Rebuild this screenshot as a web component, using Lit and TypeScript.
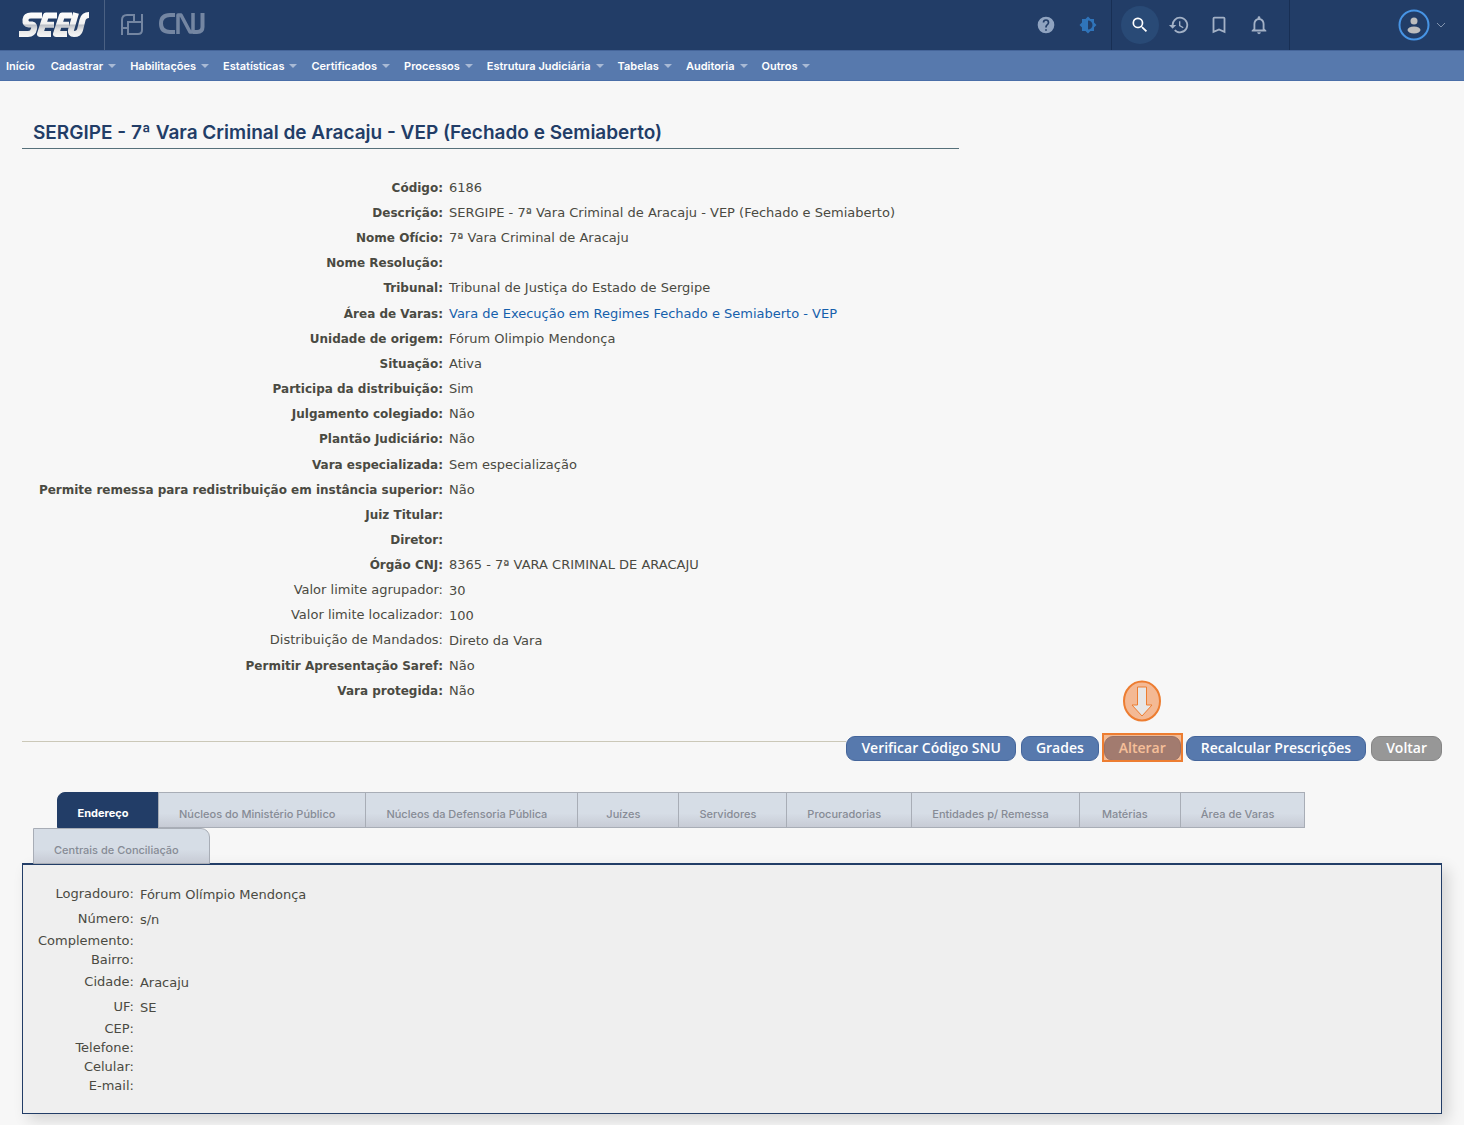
import { LitElement, html, css, nothing } from "lit";
import { customElement } from "lit/decorators.js";

const MENU: [string, boolean][] = [
  ["Início", false],
  ["Cadastrar", true],
  ["Habilitações", true],
  ["Estatísticas", true],
  ["Certificados", true],
  ["Processos", true],
  ["Estrutura Judiciária", true],
  ["Tabelas", true],
  ["Auditoria", true],
  ["Outros", true],
];

@customElement("seeu-header")
export class SeeuHeader extends LitElement {
  static styles = css`
    :host { display: block; font-family: Inter, "Liberation Sans", sans-serif; }
    .top { display: flex; align-items: stretch; height: 50px; background: #223d67; }
    .brand { display: flex; align-items: center; box-sizing: border-box; width: 105px; padding-left: 18px; border-right: 1px solid #4b6183; }
    .brand svg, .cnj svg, button svg { display: block; }
    .cnj { display: flex; align-items: center; gap: 15px; padding: 0 0 2px 15px; }
    .spacer { flex: 1; }
    .group { display: flex; align-items: center; justify-content: center; }
    .help { gap: 18px; padding-right: 11px; }
    .tools { box-sizing: border-box; width: 179px; justify-content: flex-start; gap: 16px; padding-left: 9px; border-left: 1px solid #182f54; border-right: 1px solid #182f54; }
    .user { box-sizing: border-box; width: 174px; justify-content: flex-end; padding-right: 18px; }
    button { display: flex; align-items: center; justify-content: center; width: 24px; height: 24px; padding: 0; border: 0; background: none; color: #a3b1c6; cursor: pointer; }
    .search { width: 38px; height: 38px; margin-right: -8px; border-radius: 50%; background: #294a76; color: #fff; }
    .account { width: 50px; height: 36px; gap: 5px; }
    nav { display: flex; gap: 14px; align-items: center; height: 31px; padding: 0 6px; background: #5779ad; border-top: 1px solid #45659a; border-bottom: 1px solid #4a6ea8; box-sizing: border-box; }
    nav a { display: flex; align-items: center; gap: 5px; color: #fff; text-decoration: none; font-size: 11px; font-weight: 600; line-height: 16px; white-space: nowrap; }
    nav a:first-child { padding-right: 2px; }
    .caret { width: 0; height: 0; border: 4px solid transparent; border-top-color: #a9bad5; border-bottom: 0; }
  `;

  render() {
    return html`
      <header>
        <div class="top">
          <a class="brand" href="#" aria-label="SEEU">
            <svg width="72" height="28" viewBox="0 0 72 28" fill="none" stroke="url(#metal)" stroke-width="6" stroke-linejoin="round">
              <defs>
                <linearGradient id="metal" gradientUnits="userSpaceOnUse" x1="0" y1="1" x2="0" y2="27">
                  <stop offset="0" stop-color="#ffffff" />
                  <stop offset=".46" stop-color="#f0f0f0" />
                  <stop offset=".5" stop-color="#b9bec6" />
                  <stop offset=".7" stop-color="#e6e6e6" />
                  <stop offset="1" stop-color="#fafafa" />
                </linearGradient>
              </defs>
              <path d="M24 4.500H13Q8 4.500 7.500 8.500Q7 13 11 13.500H14Q17 14 16 18Q15 23 10 23H1" />
              <path d="M39 4.500H28L22 23H33M24 13.700H36" />
              <path d="M54 4.500H44L38 23H49M40 13.700H51" />
              <path d="M58 2L53 19Q52 23 56 23Q61 23 62 19L64.500 9Q66 4 71 4" />
            </svg>
          </a>
          <div class="cnj">
            <svg width="24" height="24" viewBox="0 0 24 24" fill="none" stroke="#7486a2" stroke-width="2">
              <path d="M2 23V8Q2 3 7 3H14V10M2 16H8M22 2V18Q22 22 18 22H8V10H22" />
            </svg>
            <svg width="48" height="24" viewBox="0 0 48 24" fill="none" stroke="#7486a2" stroke-width="4">
              <path d="M16 3H11Q2 3 2 11.500Q2 20 11 20H16" />
              <path d="M19 22V3H22L31 20H34V1" stroke-width="3.500" stroke-linejoin="round" />
              <path d="M43.500 1V15Q43.500 20 38 20H34" />
            </svg>
          </div>
          <div class="spacer"></div>
          <div class="group help">
            <button aria-label="Ajuda"><svg width="20" height="20" viewBox="0 0 24 24" fill="#8fa3c0"><path d="M12 2a10 10 0 1 0 0 20 10 10 0 0 0 0-20zm1 17h-2v-2h2zm2.070-7.750-.9.920C13.450 12.900 13 13.500 13 15h-2v-.5c0-1.100.45-2.100 1.170-2.830l1.240-1.260c.37-.36.59-.86.59-1.410a2 2 0 0 0-4 0H8a4 4 0 0 1 8 0c0 .88-.36 1.680-.93 2.250z" /></svg></button>
            <button aria-label="Contraste"><svg width="18" height="18" viewBox="0 0 24 24" fill="#2f74ba"><path fill-rule="evenodd" d="M20 15.310 23.310 12 20 8.690V4h-4.690L12 .69 8.690 4H4v4.690L.69 12 4 15.310V20h4.690L12 23.310 15.310 20H20zM12 18V6a6 6 0 0 1 0 12z" /></svg></button>
          </div>
          <div class="group tools">
            <button class="search" aria-label="Pesquisar"><svg width="20" height="20" viewBox="0 0 24 24" fill="currentColor"><path d="M15.500 14h-.79l-.28-.27A6.500 6.500 0 1 0 13.730 14.430l.27.28v.79l5 4.990L20.490 19zm-6 0a4.500 4.500 0 1 1 0-9 4.500 4.500 0 0 1 0 9z" /></svg></button>
            <button aria-label="Histórico"><svg width="22" height="22" viewBox="0 0 24 24" fill="currentColor"><path d="M13 3a9 9 0 0 0-9 9H1l3.890 3.890.07.14L9 12H6a7 7 0 1 1 2.060 4.940l-1.420 1.420A9 9 0 1 0 13 3zm-1 5v5l4.280 2.540.72-1.210-3.500-2.080V8z" /></svg></button>
            <button aria-label="Favoritos"><svg width="22" height="22" viewBox="0 0 24 24" fill="currentColor"><path d="M17 3H7a2 2 0 0 0-2 2v16l7-3 7 3V5a2 2 0 0 0-2-2zm0 15-5-2.180L7 18V5h10z" /></svg></button>
            <button aria-label="Notificações"><svg width="22" height="22" viewBox="0 0 24 24" fill="currentColor"><path d="M12 22a2 2 0 0 0 2-2h-4a2 2 0 0 0 2 2zm6-6v-5c0-3.070-1.630-5.640-4.500-6.320V4a1.500 1.500 0 0 0-3 0v.68C7.640 5.360 6 7.920 6 11v5l-2 2v1h16v-1zm-2 1H8v-6c0-2.480 1.510-4.500 4-4.500s4 2.020 4 4.500z" /></svg></button>
          </div>
          <div class="group user">
            <button class="account" aria-label="Conta do usuário">
              <svg width="34" height="34" viewBox="0 0 34 34"><circle cx="17" cy="17" r="14.500" fill="none" stroke="#4794e4" stroke-width="2" /><circle cx="17" cy="13" r="3.500" fill="#bdbdbd" /><ellipse cx="17" cy="22" rx="6.500" ry="3.500" fill="#bdbdbd" /></svg>
              <svg width="10" height="6" viewBox="0 0 10 6" fill="none" stroke="#8193ad"><path d="M1 1l4 4 4-4" /></svg>
            </button>
          </div>
        </div>
        <nav aria-label="Principal">
          ${MENU.map(([label, sub]) => html`<a href="#">${label}${sub ? html`<span class="caret"></span>` : nothing}</a>`)}
        </nav>
      </header>
    `;
  }
}

interface Field {
  label: string;
  value?: string;
  link?: boolean;
  plain?: boolean;
}

const DETAILS: Field[] = [
  { label: "Código:", value: "6186" },
  { label: "Descrição:", value: "SERGIPE - 7ª Vara Criminal de Aracaju - VEP (Fechado e Semiaberto)" },
  { label: "Nome Ofício:", value: "7ª Vara Criminal de Aracaju" },
  { label: "Nome Resolução:" },
  { label: "Tribunal:", value: "Tribunal de Justiça do Estado de Sergipe" },
  { label: "Área de Varas:", value: "Vara de Execução em Regimes Fechado e Semiaberto - VEP", link: true },
  { label: "Unidade de origem:", value: "Fórum Olimpio Mendonça" },
  { label: "Situação:", value: "Ativa" },
  { label: "Participa da distribuição:", value: "Sim" },
  { label: "Julgamento colegiado:", value: "Não" },
  { label: "Plantão Judiciário:", value: "Não" },
  { label: "Vara especializada:", value: "Sem especialização" },
  { label: "Permite remessa para redistribuição em instância superior:", value: "Não" },
  { label: "Juiz Titular:" },
  { label: "Diretor:" },
  { label: "Órgão CNJ:", value: "8365 - 7ª VARA CRIMINAL DE ARACAJU" },
  { label: "Valor limite agrupador:", value: "30", plain: true },
  { label: "Valor limite localizador:", value: "100", plain: true },
  { label: "Distribuição de Mandados:", value: "Direto da Vara", plain: true },
  { label: "Permitir Apresentação Saref:", value: "Não" },
  { label: "Vara protegida:", value: "Não" },
];

const ADDRESS: Field[] = [
  { label: "Logradouro:", value: "Fórum Olímpio Mendonça" },
  { label: "Número:", value: "s/n" },
  { label: "Complemento:" },
  { label: "Bairro:" },
  { label: "Cidade:", value: "Aracaju" },
  { label: "UF:", value: "SE" },
  { label: "CEP:" },
  { label: "Telefone:" },
  { label: "Celular:" },
  { label: "E-mail:" },
];

const TABS = [
  "Endereço",
  "Núcleos do Ministério Público",
  "Núcleos da Defensoria Pública",
  "Juízes",
  "Servidores",
  "Procuradorias",
  "Entidades p/ Remessa",
  "Matérias",
  "Área de Varas",
];

@customElement("app-root")
export class AppRoot extends LitElement {
  static styles = css`
    :host { display: block; min-height: 100vh; background: #f7f7f7; color: #4a4a42; font-family: Verdana, "DejaVu Sans", sans-serif; font-size: 13px; }
    main { padding: 38px 22px 10px; }
    h1 { box-sizing: border-box; width: 66%; margin: 0; padding: 1px 11px 3px; border-bottom: 1px solid #56707a; color: #223d67; font: 600 19px/25px Inter, "Liberation Sans", sans-serif; }
    table { border-spacing: 0; border-collapse: collapse; }
    th, td { padding: 0; line-height: 18px; white-space: nowrap; }
    th { text-align: right; }
    td { padding-left: 6px; text-align: left; }
    .details { height: 529px; margin-top: 26px; }
    .details th { min-width: 421px; font-size: 12px; }
    .details .plain th { padding-bottom: 2px; font-size: 13px; font-weight: 400; line-height: 16px; }
    td a { color: #1560ac; text-decoration: none; }

    .actions { display: flex; align-items: flex-start; gap: 5px; margin-top: 32px; }
    .rule { flex: 1; margin: 5px -5px 0 0; border-top: 1px solid #cbc8b8; }
    .btn { box-sizing: border-box; height: 25px; padding: 0 14px 2px; border: 1px solid #44659b; border-radius: 9px; background: #5779ad; color: #fff; font: 600 14px/20px "Open Sans", sans-serif; white-space: nowrap; cursor: pointer; }
    .back { background: #979797; border-color: #858585; }
    .marked { position: relative; }
    .frame { position: absolute; inset: -4px -3px -2px; border: 2px solid #ed7d31; background: rgba(237, 125, 49, 0.5); pointer-events: none; }
    .pointer { position: absolute; left: 50%; bottom: 38px; margin-left: -20px; }

    .tabs { display: flex; flex-wrap: wrap; margin-top: 31px; padding: 0 11px; }
    .tab { box-sizing: border-box; min-width: 102px; height: 36px; margin-right: -1px; padding: 8px 30px 0 20px; border: 1px solid #a8adb6; background: linear-gradient(#d6dde6 60%, #c7cbd5); color: #868b95; font: 500 11px/16px Inter, "Liberation Sans", sans-serif; white-space: nowrap; cursor: pointer; }
    .first { margin-left: 24px; padding: 6px 29px 0 19px; border-color: #223d67; border-radius: 8px 0 0 0; background: #223d67; color: #fff; font-weight: 700; }
    .last { margin-bottom: -1px; border-radius: 0 9px 0 0; }
    .break { flex-basis: 100%; }
    .panel { padding: 17px 15px; border: 1px solid #223d67; border-top-width: 2px; background: #efefef; box-shadow: 6px 6px 14px rgba(0, 0, 0, 0.14); }
    .panel th { min-width: 95px; padding-bottom: 1px; font-weight: 400; }
    .panel tr { height: 19px; }
    .panel .filled { height: 25px; }
    .panel .filled td { padding-top: 1px; }
  `;

  private row(f: Field) {
    const cls = f.plain ? "plain" : f.value ? "filled" : "empty";
    return html`<tr class=${cls}><th scope="row">${f.label}</th><td>${f.link ? html`<a href="#">${f.value}</a>` : f.value ?? nothing}</td></tr>`;
  }

  render() {
    return html`
      <seeu-header></seeu-header>
      <main>
        <h1>SERGIPE - 7ª Vara Criminal de Aracaju - VEP (Fechado e Semiaberto)</h1>
        <table class="details"><tbody>${DETAILS.map((f) => this.row(f))}</tbody></table>
        <div class="actions">
          <span class="rule"></span>
          <button class="btn">Verificar Código SNU</button>
          <button class="btn">Grades</button>
          <button class="btn marked">Alterar
            <span class="frame"></span>
            <svg class="pointer" width="40" height="42" viewBox="0 0 40 42"><ellipse cx="20" cy="21" rx="18" ry="19.500" fill="#f4b994" stroke="#ed7d31" stroke-width="2" /><path d="M15.500 7H24.500V25H30L20 36 10 25H15.500Z" fill="#e7e6e6" stroke="#ed7d31" /></svg>
          </button>
          <button class="btn">Recalcular Prescrições</button>
          <button class="btn back">Voltar</button>
        </div>
        <div class="tabs" role="tablist">
          ${TABS.map((t, i) => html`<button class="tab ${i === 0 ? "first" : ""}" role="tab" aria-selected=${i === 0}>${t}</button>`)}
          <span class="break"></span>
          <button class="tab last" role="tab" aria-selected="false">Centrais de Conciliação</button>
        </div>
        <section class="panel" role="tabpanel" aria-label="Endereço">
          <table><tbody>${ADDRESS.map((f) => this.row(f))}</tbody></table>
        </section>
      </main>
    `;
  }
}
